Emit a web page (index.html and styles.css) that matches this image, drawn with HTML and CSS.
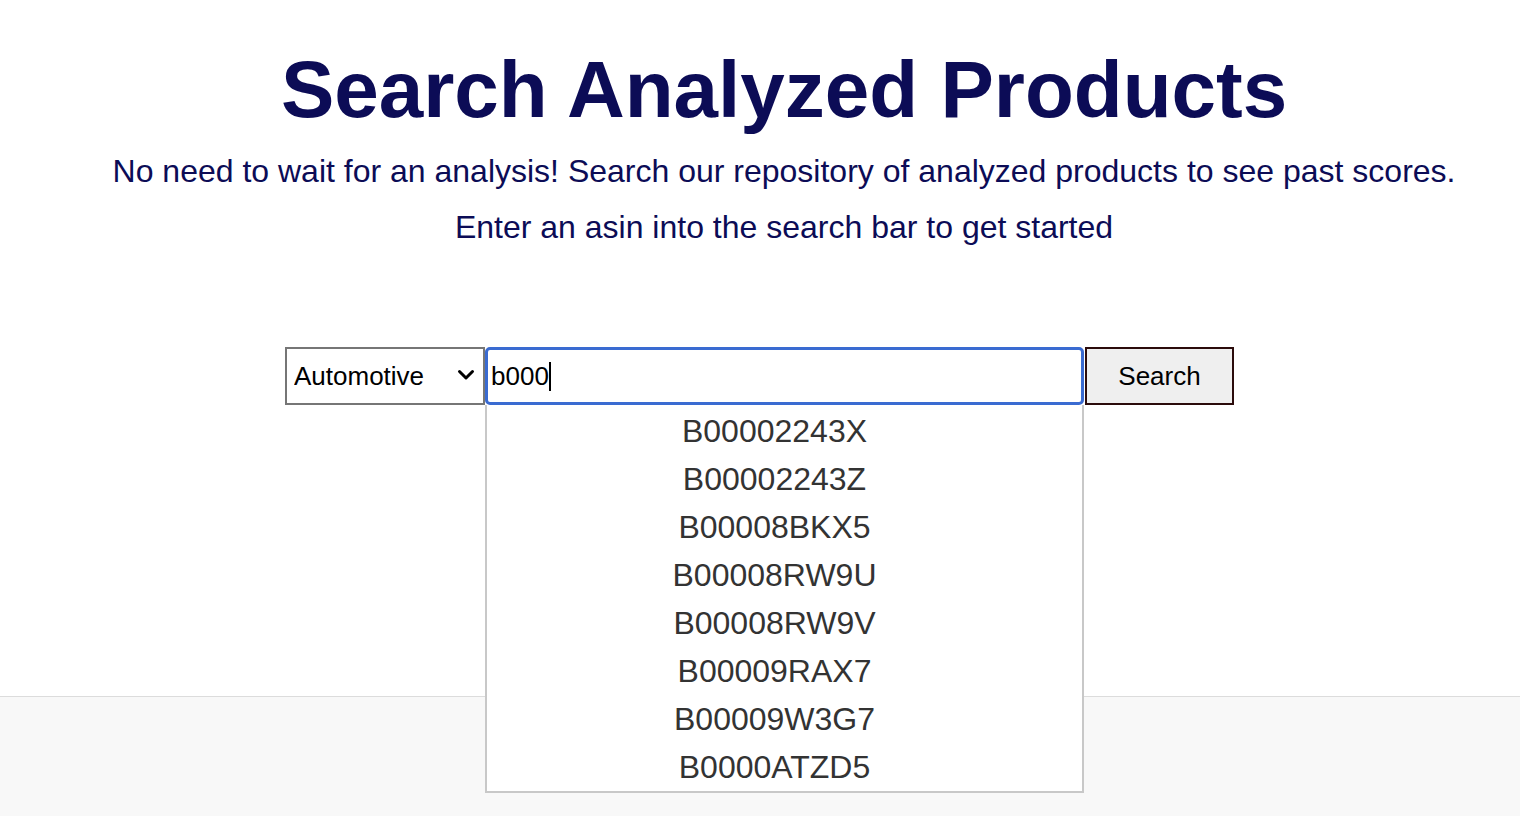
FILE: index.html
```html
<!DOCTYPE html>
<html lang="en">
<head>
<meta charset="utf-8">
<title>Search Analyzed Products</title>
<link rel="stylesheet" href="styles.css">
</head>
<body>
<main class="page">
  <div class="heading">
    <h1 class="title">Search Analyzed Products</h1>
    <div class="intro">
      <p>No need to wait for an analysis! Search our repository of analyzed products to see past scores.</p>
      <p>Enter an asin into the search bar to get started</p>
    </div>
  </div>
  <form class="search-row" onsubmit="return false">
    <div class="select-wrap">
      <select class="category">
        <option>Automotive</option>
      </select>
      <svg class="chev" width="18" height="12" viewBox="0 0 18 12"><path d="M2.5 2.5 L9 9 L15.5 2.5" fill="none" stroke="#000" stroke-width="3" stroke-linecap="round" stroke-linejoin="round"/></svg>
    </div>
    <div class="input-wrap">
      <div class="asin-input"><span class="typed">b000</span><span class="caret"></span></div>
      <ul class="suggestions">
        <li>B00002243X</li>
        <li>B00002243Z</li>
        <li>B00008BKX5</li>
        <li>B00008RW9U</li>
        <li>B00008RW9V</li>
        <li>B00009RAX7</li>
        <li>B00009W3G7</li>
        <li>B0000ATZD5</li>
      </ul>
    </div>
    <button class="search-btn" type="submit">Search</button>
  </form>
</main>
<footer class="footer"></footer>
</body>
</html>
```
FILE: styles.css
```css
html, body {
  margin: 0;
  padding: 0;
  background: #ffffff;
  font-family: "Liberation Sans", Arial, Helvetica, sans-serif;
}

body {
  display: flex;
  flex-direction: column;
  min-height: 816px;
}

.page {
  height: 696px;
  display: flex;
  flex-direction: column;
  align-items: center;
}

.heading {
  align-self: stretch;
  padding-left: 48px;
}

.title {
  margin: 44px 0 0;
  font-size: 80px;
  line-height: 92px;
  font-weight: 700;
  color: #0c0c56;
  text-align: center;
}

.intro {
  margin-top: 7px;
  text-align: center;
  color: #0c0c56;
  font-size: 32px;
  line-height: 56px;
}

.intro p {
  margin: 0;
}

.search-row {
  margin-top: 92px;
  margin-right: 1px;
  display: flex;
  height: 58px;
}

.select-wrap {
  position: relative;
  width: 200px;
}

.category {
  appearance: none;
  -webkit-appearance: none;
  width: 200px;
  height: 58px;
  box-sizing: border-box;
  border: 2px solid #767676;
  border-radius: 0;
  background: #fff;
  padding: 0 0 0 7px;
  font-family: "Liberation Sans", Arial, sans-serif;
  font-size: 26px;
  color: #000;
}

.chev {
  position: absolute;
  left: 172px;
  top: 22px;
  pointer-events: none;
}

.input-wrap {
  position: relative;
  width: 599px;
}

.asin-input {
  box-sizing: border-box;
  height: 58px;
  border: 3px solid #3a6bd1;
  border-radius: 5px;
  padding: 0 0 0 3px;
  display: flex;
  align-items: center;
  font-size: 26px;
  color: #000;
}

.caret {
  display: inline-block;
  width: 2px;
  height: 29px;
  background: #000;
}

.suggestions {
  position: absolute;
  left: 0;
  top: 58px;
  width: 599px;
  box-sizing: border-box;
  margin: 0;
  padding: 2px 0 0;
  list-style: none;
  background: #fff;
  border: 2px solid #c8c8c8;
  border-top: none;
  z-index: 2;
}

.suggestions li {
  text-align: center;
  font-size: 32px;
  line-height: 48px;
  color: #333333;
  padding-right: 20px;
}

.search-btn {
  width: 149px;
  height: 58px;
  margin-left: 1px;
  box-sizing: border-box;
  border: 2px solid #2b0b0b;
  border-radius: 0;
  background: #efefef;
  font-family: "Liberation Sans", Arial, sans-serif;
  font-size: 26px;
  color: #000;
  padding: 0;
}

.footer {
  flex: 1;
  background: #f8f8f8;
  border-top: 1px solid #dcdcdc;
}
```
